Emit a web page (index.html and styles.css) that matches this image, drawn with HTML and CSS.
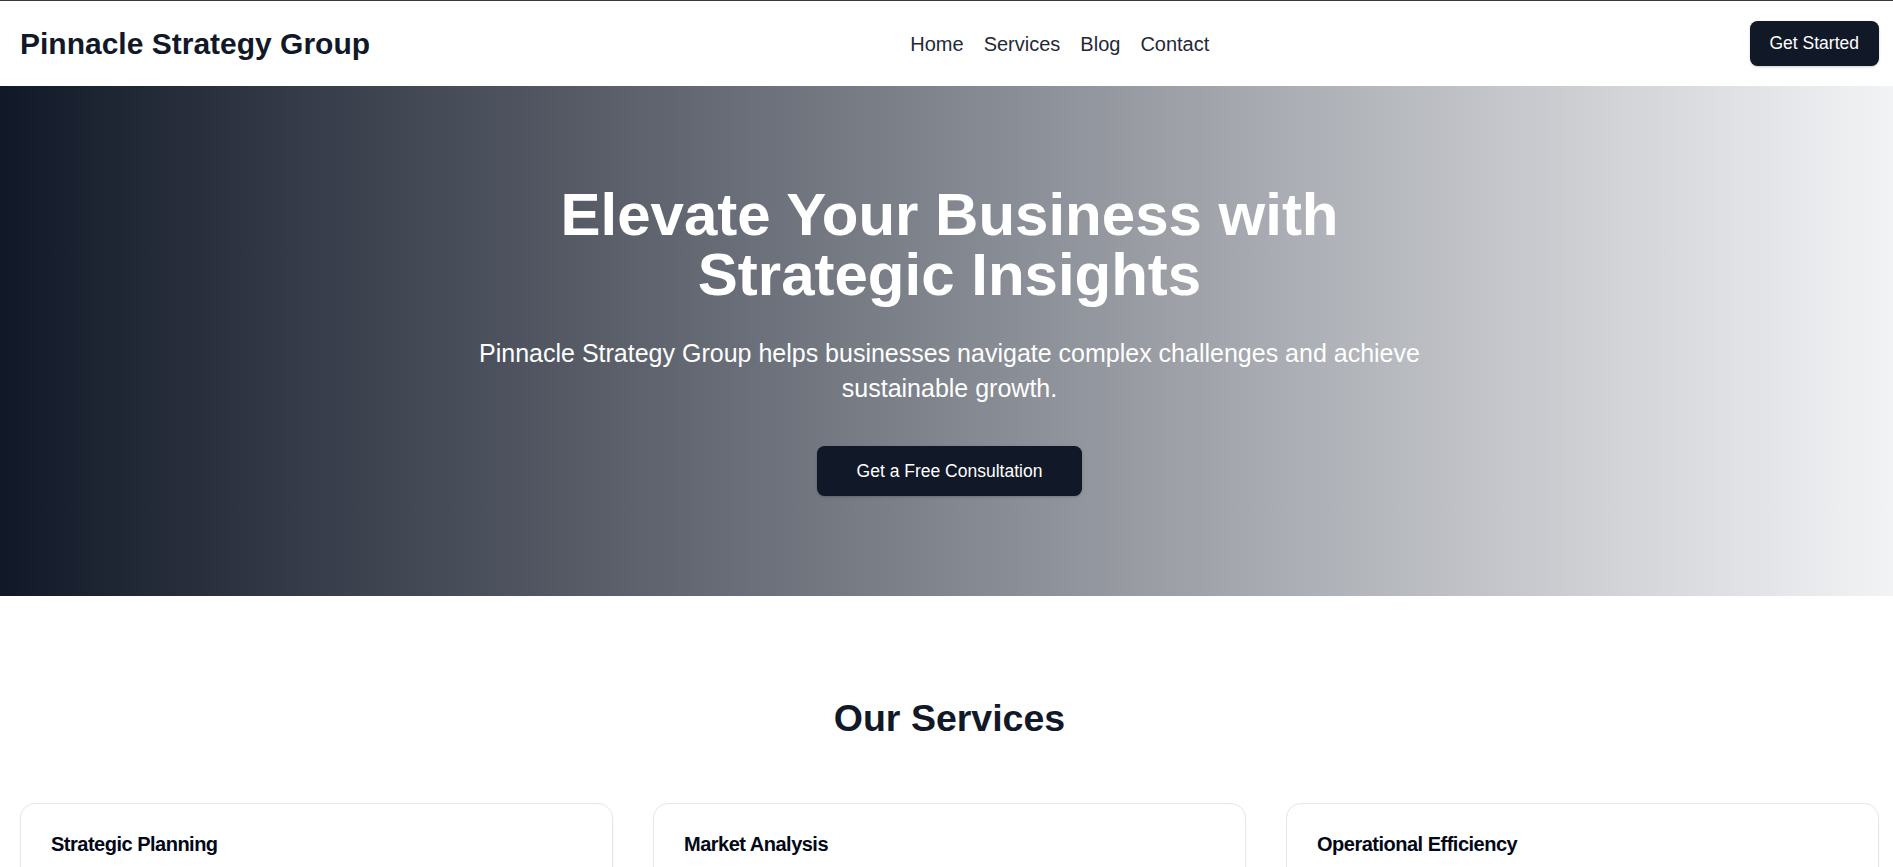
FILE: index.html
```html
<!DOCTYPE html>
<html lang="en">
<head>
<meta charset="utf-8">
<title>Pinnacle Strategy Group</title>
<link rel="stylesheet" href="styles.css">
</head>
<body>
<div class="page">
  <header class="site-header">
    <a class="logo" href="#">Pinnacle Strategy Group</a>
    <nav class="main-nav">
      <a href="#">Home</a>
      <a href="#">Services</a>
      <a href="#">Blog</a>
      <a href="#">Contact</a>
    </nav>
    <a class="btn btn-header" href="#">Get Started</a>
  </header>

  <section class="hero">
    <div class="hero-inner">
      <h1 class="hero-title">Elevate Your Business with Strategic Insights</h1>
      <p class="hero-sub">Pinnacle Strategy Group helps businesses navigate complex challenges and achieve sustainable growth.</p>
      <a class="btn btn-hero" href="#">Get a Free Consultation</a>
    </div>
  </section>

  <section class="services">
    <h2 class="section-title">Our Services</h2>
    <div class="card-grid">
      <div class="card">
        <h3 class="card-title">Strategic Planning</h3>
        <p class="card-text">Develop a clear roadmap to achieve your long-term business goals.</p>
      </div>
      <div class="card">
        <h3 class="card-title">Market Analysis</h3>
        <p class="card-text">Gain deep insights into your market, competitors and customers.</p>
      </div>
      <div class="card">
        <h3 class="card-title">Operational Efficiency</h3>
        <p class="card-text">Streamline your processes to reduce costs and improve performance.</p>
      </div>
    </div>
  </section>
</div>
</body>
</html>
```

FILE: styles.css
```css
html, body {
  margin: 0;
  padding: 0;
  overflow-x: hidden;
  background: #ffffff;
}

body {
  font-family: "Liberation Sans", Arial, sans-serif;
  color: #111827;
  border-top: 1px solid #3a3a3a;
}

.page {
  width: 1899px;
}

a {
  text-decoration: none;
  color: inherit;
}

/* Header */
.site-header {
  display: flex;
  align-items: center;
  justify-content: space-between;
  padding: 20px 20px;
  background: #ffffff;
}

.logo {
  font-size: 30px;
  line-height: 40px;
  font-weight: 700;
  color: #111827;
}

.main-nav {
  display: flex;
  gap: 20px;
}

.main-nav a {
  font-size: 20px;
  line-height: 30px;
  color: #1f2937;
}

.btn {
  display: inline-flex;
  align-items: center;
  justify-content: center;
  background: #111827;
  color: #ffffff;
  font-size: 17.5px;
  line-height: 25px;
  border-radius: 7.5px;
  box-shadow: 0 1px 3px rgba(0, 0, 0, 0.12), 0 1px 2px rgba(0, 0, 0, 0.08);
}

.btn-header {
  height: 45px;
  padding: 0 20px;
  box-sizing: border-box;
}

/* Hero */
.hero {
  background: linear-gradient(to right, #111827, #f3f4f6);
  padding: 99px 20px 100px;
}

.hero-inner {
  max-width: 960px;
  margin: 0 auto;
  display: flex;
  flex-direction: column;
  align-items: center;
  text-align: center;
}

.hero-title {
  margin: 0 0 31px;
  font-size: 60px;
  line-height: 60px;
  font-weight: 700;
  color: #ffffff;
}

.hero-sub {
  margin: 0 0 40px;
  font-size: 25px;
  line-height: 35px;
  color: #ffffff;
}

.btn-hero {
  height: 50px;
  padding: 0 40px;
  box-sizing: border-box;
}

/* Services */
.services {
  padding: 100px 20px;
}

.section-title {
  margin: 0 0 62px;
  text-align: center;
  font-size: 37.5px;
  line-height: 45px;
  font-weight: 700;
  color: #111827;
}

.card-grid {
  display: grid;
  grid-template-columns: repeat(3, 1fr);
  gap: 40px;
}

.card {
  border: 1px solid #e5e7eb;
  border-radius: 15px;
  background: #ffffff;
  box-shadow: 0 1px 2px rgba(0, 0, 0, 0.05);
  padding: 30px;
  color: #020817;
}

.card-title {
  margin: 0 0 20px;
  font-size: 20px;
  line-height: 20px;
  font-weight: 700;
  letter-spacing: -0.5px;
  color: #020817;
}

.card-text {
  margin: 0;
  font-size: 17.5px;
  line-height: 25px;
  color: #64748b;
}
```
